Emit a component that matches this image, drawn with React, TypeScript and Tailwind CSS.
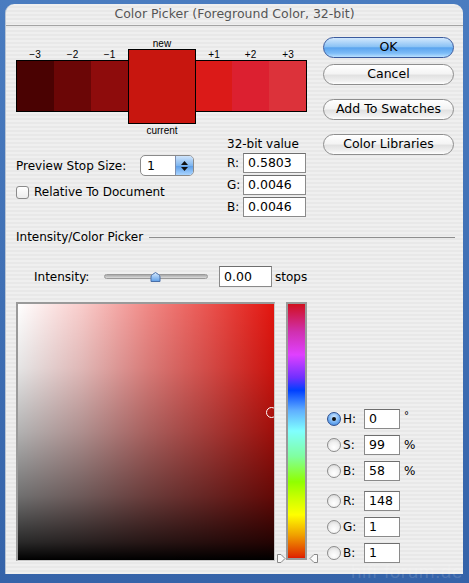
import React from 'react'

const sideSwatches = {
  left: [
    { label: '−3', color: 'bg-[#4a0202]', w: 'w-[38px] border-l' },
    { label: '−2', color: 'bg-[#6b0606]', w: 'w-[37px]' },
    { label: '−1', color: 'bg-[#8e0c0c]', w: 'w-[37px]' },
  ],
  right: [
    { label: '+1', color: 'bg-[#db1a18]', w: 'w-[36px]' },
    { label: '+2', color: 'bg-[#dc2030]', w: 'w-[37px]' },
    { label: '+3', color: 'bg-[#dc323a]', w: 'w-[38px] border-r' },
  ],
}

function Side({ label, color, w }: { label: string; color: string; w: string }) {
  return (
    <div className={`mt-[11px] flex flex-col ${w.includes('w-[38px]') ? 'w-[38px]' : w.includes('w-[36px]') ? 'w-[36px]' : 'w-[37px]'}`}>
      <div className="h-[11px] text-center text-[10px] leading-[11px] font-['Liberation_Sans',sans-serif] text-black">
        {label}
      </div>
      <div className={`h-[52px] border-y border-black ${color} ${w}`} />
    </div>
  )
}

function AquaButton({ children, primary }: { children: React.ReactNode; primary?: boolean }) {
  return (
    <div
      className={`h-[21px] w-[131px] rounded-full border flex items-center justify-center text-[12.5px] text-black ${
        primary
          ? 'border-[#3b5b9e] bg-[linear-gradient(to_bottom,#d2e8fd_0%,#8cc3f5_45%,#5aa4ee_52%,#7dbcf7_80%,#b9e0ff_100%)]'
          : 'border-[#8e8e8e] bg-[linear-gradient(to_bottom,#ffffff_0%,#f4f4f4_45%,#e2e2e2_55%,#f0f0f0_85%,#ffffff_100%)]'
      }`}
    >
      {children}
    </div>
  )
}

function Field({ value, w }: { value: string; w: string }) {
  return (
    <div className={`${w} h-[20px] border border-[#8a8a8a] border-t-[#6e6e6e] bg-white pl-[4px] text-[12.5px] leading-[18px] text-black`}>
      {value}
    </div>
  )
}

function Radio({ on }: { on?: boolean }) {
  return on ? (
    <div className="w-[14px] h-[14px] rounded-full border border-[#2e4f8f] bg-[radial-gradient(circle_at_50%_35%,#d6ebff_0%,#6aaaf0_60%,#3a7bd8_100%)] flex items-center justify-center">
      <div className="w-[4px] h-[4px] rounded-full bg-[#111]" />
    </div>
  ) : (
    <div className="w-[14px] h-[14px] rounded-full border border-[#8c8c8c] bg-[radial-gradient(circle_at_50%_70%,#ffffff_0%,#f0f0f0_50%,#cfcfcf_100%)]" />
  )
}

const channels = [
  { k: 'H', v: '0', u: '°', on: true },
  { k: 'S', v: '99', u: '%' },
  { k: 'B', v: '58', u: '%' },
  { k: 'R', v: '148', u: '', gap: true },
  { k: 'G', v: '1', u: '' },
  { k: 'B', v: '1', u: '' },
]

export default function App() {
  return (
    <div className="relative w-[469px] h-[583px] overflow-hidden bg-[linear-gradient(to_bottom,#4a7cc0,#3563a9)] pt-[4px] pl-[5px] font-['DejaVu_Sans',sans-serif] text-[12px] text-black">
      <div className="w-[458px] h-[570px] rounded-t-[9px] border-l border-[#b8c4d4] bg-[repeating-linear-gradient(to_bottom,#efefef_0px,#efefef_2px,#e8e8e8_2px,#e8e8e8_4px)] flex flex-col">
        {/* title bar */}
        <div className="h-[22px] flex items-center justify-center border-b border-[#a3a3a3] text-[12.5px] text-[#555]">
          Color Picker (Foreground Color, 32-bit)
        </div>

        {/* top section */}
        <div className="flex pl-[10px]">
          <div className="w-[291px] flex flex-col">
            <div className="mt-[12px] flex items-start">
              {sideSwatches.left.map((s) => (
                <Side key={s.label} {...s} />
              ))}
              <div className="w-[68px] flex flex-col">
                <div className="h-[11px] text-center text-[10px] leading-[11px] font-['Liberation_Sans',sans-serif]">new</div>
                <div className="h-[75px] border border-black bg-[#c8160f]" />
                <div className="h-[13px] text-center text-[10px] leading-[13px] font-['Liberation_Sans',sans-serif]">current</div>
              </div>
              {sideSwatches.right.map((s) => (
                <Side key={s.label} {...s} />
              ))}
            </div>

            <div className="flex">
              <div className="w-[211px] pt-[18px] flex flex-col">
                <div className="h-[21px] flex items-center">
                  <span className="w-[124px]">Preview Stop Size:</span>
                  <div className="w-[54px] h-[21px] rounded-[5px] border border-[#8a8a8a] bg-white flex overflow-hidden">
                    <span className="flex-1 pl-[6px] leading-[19px] text-[12.5px]">1</span>
                    <div className="w-[18px] border-l border-[#7d8fb0] bg-[linear-gradient(to_bottom,#cfe4fb,#7fb6ef_50%,#5b9de8_52%,#a9d4ff)] flex flex-col items-center justify-center gap-[2px]">
                      <svg width="7" height="4" viewBox="0 0 7 4"><path d="M0 4 L3.5 0 L7 4 Z" fill="#111" /></svg>
                      <svg width="7" height="4" viewBox="0 0 7 4"><path d="M0 0 L3.5 4 L7 0 Z" fill="#111" /></svg>
                    </div>
                  </div>
                </div>
                <div className="mt-[7px] flex items-center">
                  <div className="w-[13px] h-[13px] rounded-[3px] border border-[#8a8a8a] bg-[linear-gradient(to_bottom,#ffffff,#ececec)]" />
                  <span className="ml-[5px]">Relative To Document</span>
                </div>
              </div>
              <div className="w-[80px] flex flex-col gap-[2px]">
                <div className="h-[14px] leading-[14px]">32-bit value</div>
                {[
                  ['R:', '0.5803'],
                  ['G:', '0.0046'],
                  ['B:', '0.0046'],
                ].map(([k, v]) => (
                  <div key={k} className="h-[20px] flex items-center">
                    <span className="w-[16px]">{k}</span>
                    <Field value={v} w="w-[63px]" />
                  </div>
                ))}
              </div>
            </div>
          </div>

          <div className="ml-[16px] pt-[11px] flex flex-col">
            <AquaButton primary>OK</AquaButton>
            <div className="mt-[6px]">
              <AquaButton>Cancel</AquaButton>
            </div>
            <div className="mt-[14px]">
              <AquaButton>Add To Swatches</AquaButton>
            </div>
            <div className="mt-[14px]">
              <AquaButton>Color Libraries</AquaButton>
            </div>
          </div>
        </div>

        {/* group heading */}
        <div className="mt-[12px] h-[16px] flex items-center pl-[10px] pr-[8px]">
          <span>Intensity/Color Picker</span>
          <div className="ml-[6px] flex-1 h-px bg-[#8e8e8e]" />
        </div>

        {/* intensity */}
        <div className="mt-[21px] h-[21px] flex items-center pl-[28px]">
          <span className="w-[70px]">Intensity:</span>
          <div className="relative w-[104px] h-[10px] flex items-center">
            <div className="w-full h-[5px] rounded-full border border-[#9a9a9a] bg-[linear-gradient(to_bottom,#a8a8a8,#dcdcdc)]" />
            <svg className="absolute left-[46px] top-[0px]" width="11" height="10" viewBox="0 0 11 10">
              <defs>
                <linearGradient id="th" x1="0" y1="0" x2="0" y2="1">
                  <stop offset="0" stopColor="#d8ebff" />
                  <stop offset="1" stopColor="#5e9ee6" />
                </linearGradient>
              </defs>
              <path d="M1 9.5 L1 5 Q1 3.5 2.5 2.5 L5.5 0.5 L8.5 2.5 Q10 3.5 10 5 L10 9.5 Z" fill="url(#th)" stroke="#4a6fa8" strokeWidth="1" />
            </svg>
          </div>
          <div className="ml-[11px]">
            <div className="w-[53px] h-[21px] border border-[#8a8a8a] border-t-[#6e6e6e] bg-white pl-[4px] text-[12.5px] leading-[19px]">0.00</div>
          </div>
          <span className="ml-[3px]">stops</span>
        </div>

        {/* picker */}
        <div className="mt-[15px] flex pl-[10px]">
          <div className="relative w-[259px] h-[259px] border-t-2 border-l-2 border-[#9a9a9a] border-r border-b border-r-[#c8c8c8] border-b-[#c8c8c8] overflow-hidden bg-[#e2150f]">
            <div className="absolute inset-0 bg-[linear-gradient(to_right,#ffffff_0%,rgba(255,255,255,0.78)_25%,rgba(255,255,255,0.5)_50%,rgba(255,255,255,0.26)_75%,rgba(255,255,255,0)_100%)]" />
            <div className="absolute inset-0 bg-[linear-gradient(to_bottom,rgba(0,0,0,0)_0%,rgba(0,0,0,0.1)_25%,rgba(0,0,0,0.3)_50%,rgba(0,0,0,0.56)_75%,rgba(0,0,0,0.84)_93%,#000_100%)]" />
            <div className="absolute left-[248px] top-[103px] w-[11px] h-[11px] rounded-full border-[1.5px] border-white" />
          </div>
          <div className="w-[11px] flex items-end pl-[2px]">
            <svg width="9" height="9" viewBox="0 0 9 9">
              <path d="M0.5 0.5 H4 L8 4.5 L4 8.5 H0.5 Z" fill="#fafafa" stroke="#888" />
            </svg>
          </div>
          <div className="w-[21px] h-[258px] border-2 border-[#9a9a9a] bg-[linear-gradient(to_top,#e01a00_0%,#e03000_1%,#f0a000_9%,#ffff00_17%,#c8ff00_24%,#90ff00_30%,#80ffa0_40%,#80ffff_50%,#60b0ff_58%,#0040ff_66%,#7030ff_71%,#e040ff_80%,#d030b0_89%,#d0101e_100%)]" />
          <div className="w-[12px] flex items-end pl-[2px]">
            <svg width="9" height="9" viewBox="0 0 9 9">
              <path d="M8.5 0.5 H5 L1 4.5 L5 8.5 H8.5 Z" fill="#fafafa" stroke="#888" />
            </svg>
          </div>

          <div className="ml-[8px] pt-[107px] flex flex-col">
            {channels.map((c, i) => (
              <div key={i} className={`h-[20px] flex items-center ${i === 0 ? '' : c.gap ? 'mt-[10px]' : 'mt-[6px]'}`}>
                <Radio on={c.on} />
                <span className="ml-[2px] w-[21px]">{c.k}:</span>
                <Field value={c.v} w="w-[36px]" />
                <span className={`ml-[4px] ${c.u === '°' ? 'text-[10px] -mt-[8px]' : ''}`}>{c.u}</span>
              </div>
            ))}
          </div>
        </div>
      </div>

      <div className="absolute right-[6px] bottom-[-3px] text-[19px] font-['Liberation_Sans',sans-serif] text-white/15 tracking-[0.5px]">
        hifi-forum.de
      </div>
    </div>
  )
}
